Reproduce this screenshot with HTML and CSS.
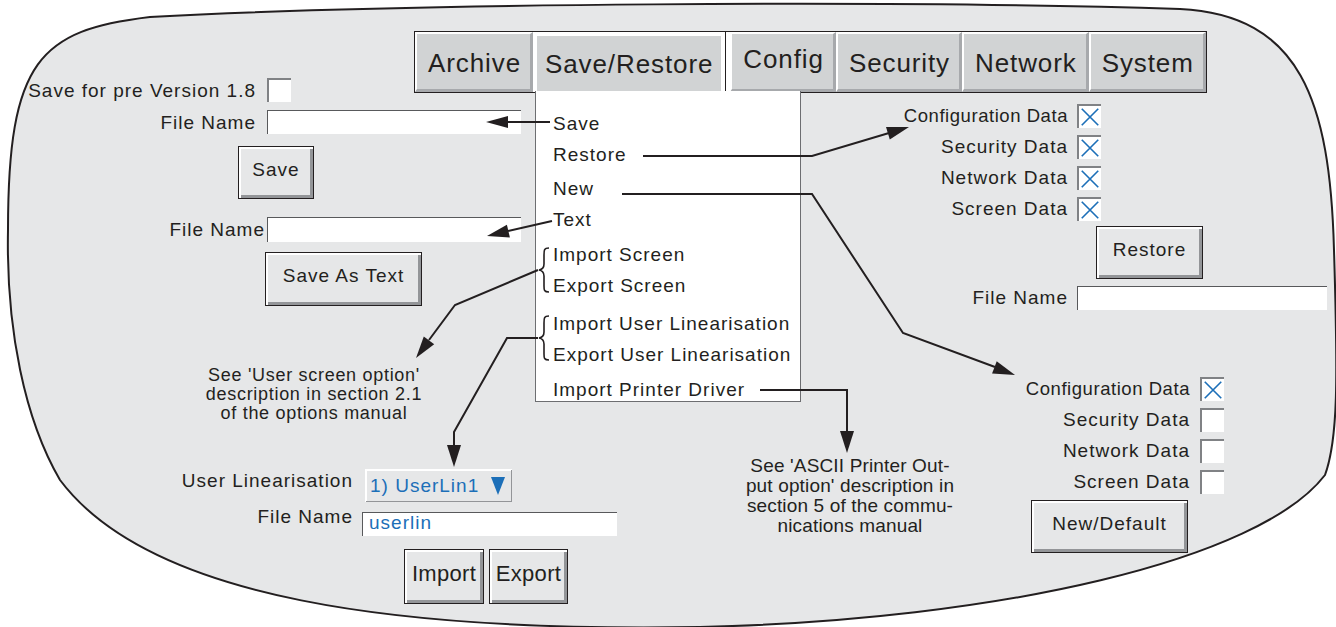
FILE: index.html
```html
<!DOCTYPE html>
<html lang="en">
<head>
<meta charset="UTF-8">
<meta name="viewport" content="width=device-width, initial-scale=1.0">
<title>Save/Restore menu</title>
<link rel="stylesheet" href="styles.css">
</head>
<body>
<div class="stage">
    <svg class="blob" width="1336" height="627" viewBox="0 0 1336 627">
        <path d="M 8 230 C 8 60, 40 30, 150 17 C 400 3, 900 0, 1180 9 C 1300 15, 1330 100, 1334 250 C 1338 380, 1338 440, 1325 475 C 1260 560, 1000 620, 700 627 C 400 632, 150 600, 60 480 C 25 420, 6 330, 8 230 Z"/>
    </svg>

    <div class="tabs">
        <div class="tab">Archive</div>
        <div class="tab tab-active">Save/Restore</div>
        <div class="tab tab-config">Config</div>
        <div class="tab">Security</div>
        <div class="tab">Network</div>
        <div class="tab">System</div>
    </div>

    <ul class="menu">
        <li>Save</li>
        <li>Restore</li>
        <li class="gap-s">New</li>
        <li>Text</li>
        <li class="gap-m">Import Screen</li>
        <li>Export Screen</li>
        <li class="gap-l">Import User Linearisation</li>
        <li>Export User Linearisation</li>
        <li class="gap-m">Import Printer Driver</li>
    </ul>

    <div class="group save-group">
        <span class="lbl">Save for pre Version 1.8</span>
        <span class="check"></span>
        <span class="lbl">File Name</span>
        <span class="field field-save"></span>
        <div class="btn btn-save">Save</div>
    </div>

    <div class="group text-group">
        <span class="lbl">File Name</span>
        <span class="field field-save"></span>
        <div class="btn btn-text">Save As Text</div>
    </div>

    <div class="group restore-group">
        <span class="lbl lbl-tight">Configuration Data</span>
        <span class="check"><svg viewBox="0 0 24 24"><path d="M3 3 L21 21 M21 3 L3 21"/></svg></span>
        <span class="lbl">Security Data</span>
        <span class="check"><svg viewBox="0 0 24 24"><path d="M3 3 L21 21 M21 3 L3 21"/></svg></span>
        <span class="lbl">Network Data</span>
        <span class="check"><svg viewBox="0 0 24 24"><path d="M3 3 L21 21 M21 3 L3 21"/></svg></span>
        <span class="lbl">Screen Data</span>
        <span class="check"><svg viewBox="0 0 24 24"><path d="M3 3 L21 21 M21 3 L3 21"/></svg></span>
        <div class="btn btn-restore">Restore</div>
        <span class="lbl">File Name</span>
        <span class="field field-restore"></span>
    </div>

    <div class="group new-group">
        <span class="lbl lbl-tight">Configuration Data</span>
        <span class="check"><svg viewBox="0 0 24 24"><path d="M3 3 L21 21 M21 3 L3 21"/></svg></span>
        <span class="lbl">Security Data</span>
        <span class="check"></span>
        <span class="lbl">Network Data</span>
        <span class="check"></span>
        <span class="lbl">Screen Data</span>
        <span class="check"></span>
        <div class="btn btn-new">New/Default</div>
    </div>

    <div class="group lin-group">
        <span class="lbl">User Linearisation</span>
        <div class="select">1) UserLin1 <span class="caret"></span></div>
        <span class="lbl lbl-raise">File Name</span>
        <span class="field field-lin">userlin</span>
        <div class="btn-row">
            <div class="btn btn-import">Import</div>
            <div class="btn btn-export">Export</div>
        </div>
    </div>

    <p class="note note-screen">See 'User screen option'<br>description in section 2.1<br>of the options manual</p>
    <p class="note note-ascii">See 'ASCII Printer Out-<br>put option' description in<br>section 5 of the commu-<br>nications manual</p>

    <svg class="arrows" width="1336" height="627" viewBox="0 0 1336 627">
        <g class="lines">
            <path d="M 550 122 H 506"/>
            <path d="M 643 156 H 812 L 889 133"/>
            <path d="M 622 194 H 812 L 903 333 L 995 367"/>
            <path d="M 552 221 L 508 231"/>
            <path d="M 538 270 L 455 305 L 429 340"/>
            <path d="M 538 338 H 507 L 454 432 V 446"/>
            <path d="M 760 390 H 847 V 432"/>
        </g>
        <g class="braces">
            <path d="M 549 248 C 544 248 544 250 544 255 L 544 264 C 544 268 542 269.5 539 270 C 542 270.5 544 272 544 276 L 544 286 C 544 290 544 292 549 292"/>
            <path d="M 549 316 C 544 316 544 318 544 323 L 544 332 C 544 336 542 337.5 539 338 C 542 338.5 544 340 544 344 L 544 354 C 544 358 544 360 549 360"/>
        </g>
        <g class="heads">
            <polygon points="486,122 508,116 508,128"/>
            <polygon points="909,127 889.8,139.5 886,127.1"/>
            <polygon points="1015,375 992.1,373.4 996.7,361.2"/>
            <polygon points="487,236 509.9,237.4 506.9,224.7"/>
            <polygon points="416,358 434.2,344.2 423.8,336.4"/>
            <polygon points="454,467 447,445 461,445"/>
            <polygon points="847,453 840,431 854,431"/>
        </g>
    </svg>
</div>
</body>
</html>
```

FILE: styles.css
```css
body {
    margin: 0;
    font-family: "Liberation Sans", Arial, sans-serif;
    color: #231f20;
    background-color: #fff;
}
.stage {
    position: relative;
    width: 1336px;
    height: 627px;
    overflow: hidden;
}
.blob {
    position: absolute;
    left: 0;
    top: 0;
}
.blob path {
    fill: #e6e7e8;
    stroke: #231f20;
    stroke-width: 2;
}
.arrows {
    position: absolute;
    left: 0;
    top: 0;
    pointer-events: none;
}
.arrows .lines path {
    fill: none;
    stroke: #231f20;
    stroke-width: 2;
}
.arrows .braces path {
    fill: none;
    stroke: #231f20;
    stroke-width: 1.6;
}
.arrows .heads polygon {
    fill: #231f20;
}

/* tab bar */
.tabs {
    position: absolute;
    left: 414px;
    top: 31px;
    display: flex;
    height: 60px;
    border: 1px solid #231f20;
    background-color: #fff;
}
.tab {
    display: flex;
    align-items: center;
    padding: 3px 9px 0 11px;
    font-size: 26px;
    letter-spacing: 0.9px;
    background-color: #d1d3d4;
    border-top: 2px solid #fff;
    border-left: 2px solid #fff;
    border-right: 3px solid #a7a9ac;
    border-bottom: 3px solid #a7a9ac;
}
.tab-active {
    padding: 1px 8px 0;
    border: 4px solid #fff;
    border-bottom: none;
    margin-right: 1px;
    box-shadow: 1px 0 0 #231f20;
}
.tab-config {
    align-items: flex-start;
    padding-top: 10px;
    margin-left: 4px;
}

/* drop down menu */
.menu {
    position: absolute;
    left: 535px;
    top: 91px;
    width: 266px;
    height: 311px;
    margin: 0;
    padding: 17px 0 0 17px;
    box-sizing: border-box;
    list-style: none;
    background-color: #fff;
    border: 1px solid #6d6e71;
    border-top: none;
}
.menu li {
    height: 31px;
    line-height: 31px;
    font-size: 19px;
    letter-spacing: 1px;
    white-space: nowrap;
}
.menu .gap-s { margin-top: 3px; }
.menu .gap-m { margin-top: 4px; }
.menu .gap-l { margin-top: 7px; }

/* form groups */
.group {
    position: absolute;
    display: grid;
    align-items: center;
}
.lbl {
    font-size: 19px;
    letter-spacing: 1px;
    text-align: right;
    white-space: nowrap;
}
.lbl-tight {
    font-size: 18.5px;
    letter-spacing: 0.55px;
}
.check {
    display: block;
    width: 24px;
    height: 24px;
    box-sizing: border-box;
    background-color: #fff;
    border-top: 2px solid #808285;
    border-left: 2px solid #808285;
}
.check svg {
    display: block;
    width: 22px;
    height: 22px;
}
.check path {
    stroke: #1c6fb8;
    stroke-width: 1.8;
    fill: none;
}
.field {
    display: block;
    height: 24px;
    box-sizing: border-box;
    background-color: #fff;
    border-top: 1px solid #58595b;
    border-left: 1px solid #58595b;
}
.field-save { width: 254px; }
.field-restore { width: 250px; }
.field-lin {
    width: 255px;
    margin-left: -3px;
    padding-left: 6px;
    font-size: 19px;
    letter-spacing: 1px;
    line-height: 20px;
    color: #1c6fb8;
}
.btn {
    display: flex;
    align-items: center;
    justify-content: center;
    box-sizing: border-box;
    height: 53px;
    font-size: 19px;
    letter-spacing: 1px;
    background-color: #e6e7e8;
    border: 1px solid #231f20;
    box-shadow: inset 2px 2px 0 #fff, inset -3px -3px 0 #939598;
    padding-bottom: 6px;
}

.save-group {
    left: 0;
    top: 77px;
    grid-template-columns: 256px auto;
    column-gap: 11px;
    row-gap: 7px;
}
.save-group .lbl { padding-top: 3px; }
.btn-save {
    grid-column: 1 / -1;
    width: 76px;
    margin: 5px 0 0 238px;
}

.text-group {
    left: 0;
    top: 217px;
    grid-template-columns: 265px auto;
    column-gap: 2px;
}
.text-group .field { height: 25px; }
.btn-text {
    grid-column: 1 / -1;
    width: 157px;
    height: 54px;
    margin: 10px 0 0 265px;
}

.restore-group {
    left: 880px;
    top: 104px;
    grid-template-columns: 188px auto;
    column-gap: 9px;
    row-gap: 7px;
}
.btn-restore {
    grid-column: 2;
    width: 107px;
    margin: -2px 0 0 19px;
}

.new-group {
    left: 1000px;
    top: 377px;
    grid-template-columns: 190px 24px;
    column-gap: 10px;
    row-gap: 7px;
}
.btn-new {
    grid-column: 1 / -1;
    width: 157px;
    margin: -1px 0 0 31px;
}

.lin-group {
    left: 0;
    top: 469px;
    grid-template-columns: 353px auto;
    column-gap: 12px;
    row-gap: 10px;
    align-items: start;
}
.lin-group .lbl { line-height: 24px; }
.lin-group .lbl-raise { margin-top: -7px; }
.select {
    display: flex;
    align-items: center;
    width: 147px;
    height: 33px;
    box-sizing: border-box;
    padding-left: 5px;
    font-size: 19px;
    letter-spacing: 1px;
    color: #1c6fb8;
    background-color: #e6e7e8;
    box-shadow: inset 1px 1px 0 #fff, inset -1px -1px 0 #939598, inset 2px 2px 0 #fff;
}
.caret {
    width: 0;
    height: 0;
    margin-left: 12px;
    border-left: 7px solid transparent;
    border-right: 7px solid transparent;
    border-top: 18px solid #1c6fb8;
}
.btn-row {
    grid-column: 2;
    display: flex;
    gap: 5px;
    margin: 3px 0 0 39px;
}
.btn-import,
.btn-export {
    height: 55px;
    font-size: 22px;
    letter-spacing: 0.3px;
}
.btn-import { width: 80px; }
.btn-export { width: 79px; }

/* annotations */
.note {
    position: absolute;
    margin: 0;
    font-size: 18px;
    letter-spacing: 0.7px;
    line-height: 19px;
    text-align: center;
}
.note-screen {
    left: 194px;
    top: 366px;
    width: 240px;
}
.note-ascii {
    left: 730px;
    top: 456px;
    width: 240px;
    font-size: 19px;
    line-height: 20px;
    letter-spacing: 0.15px;
}
```
